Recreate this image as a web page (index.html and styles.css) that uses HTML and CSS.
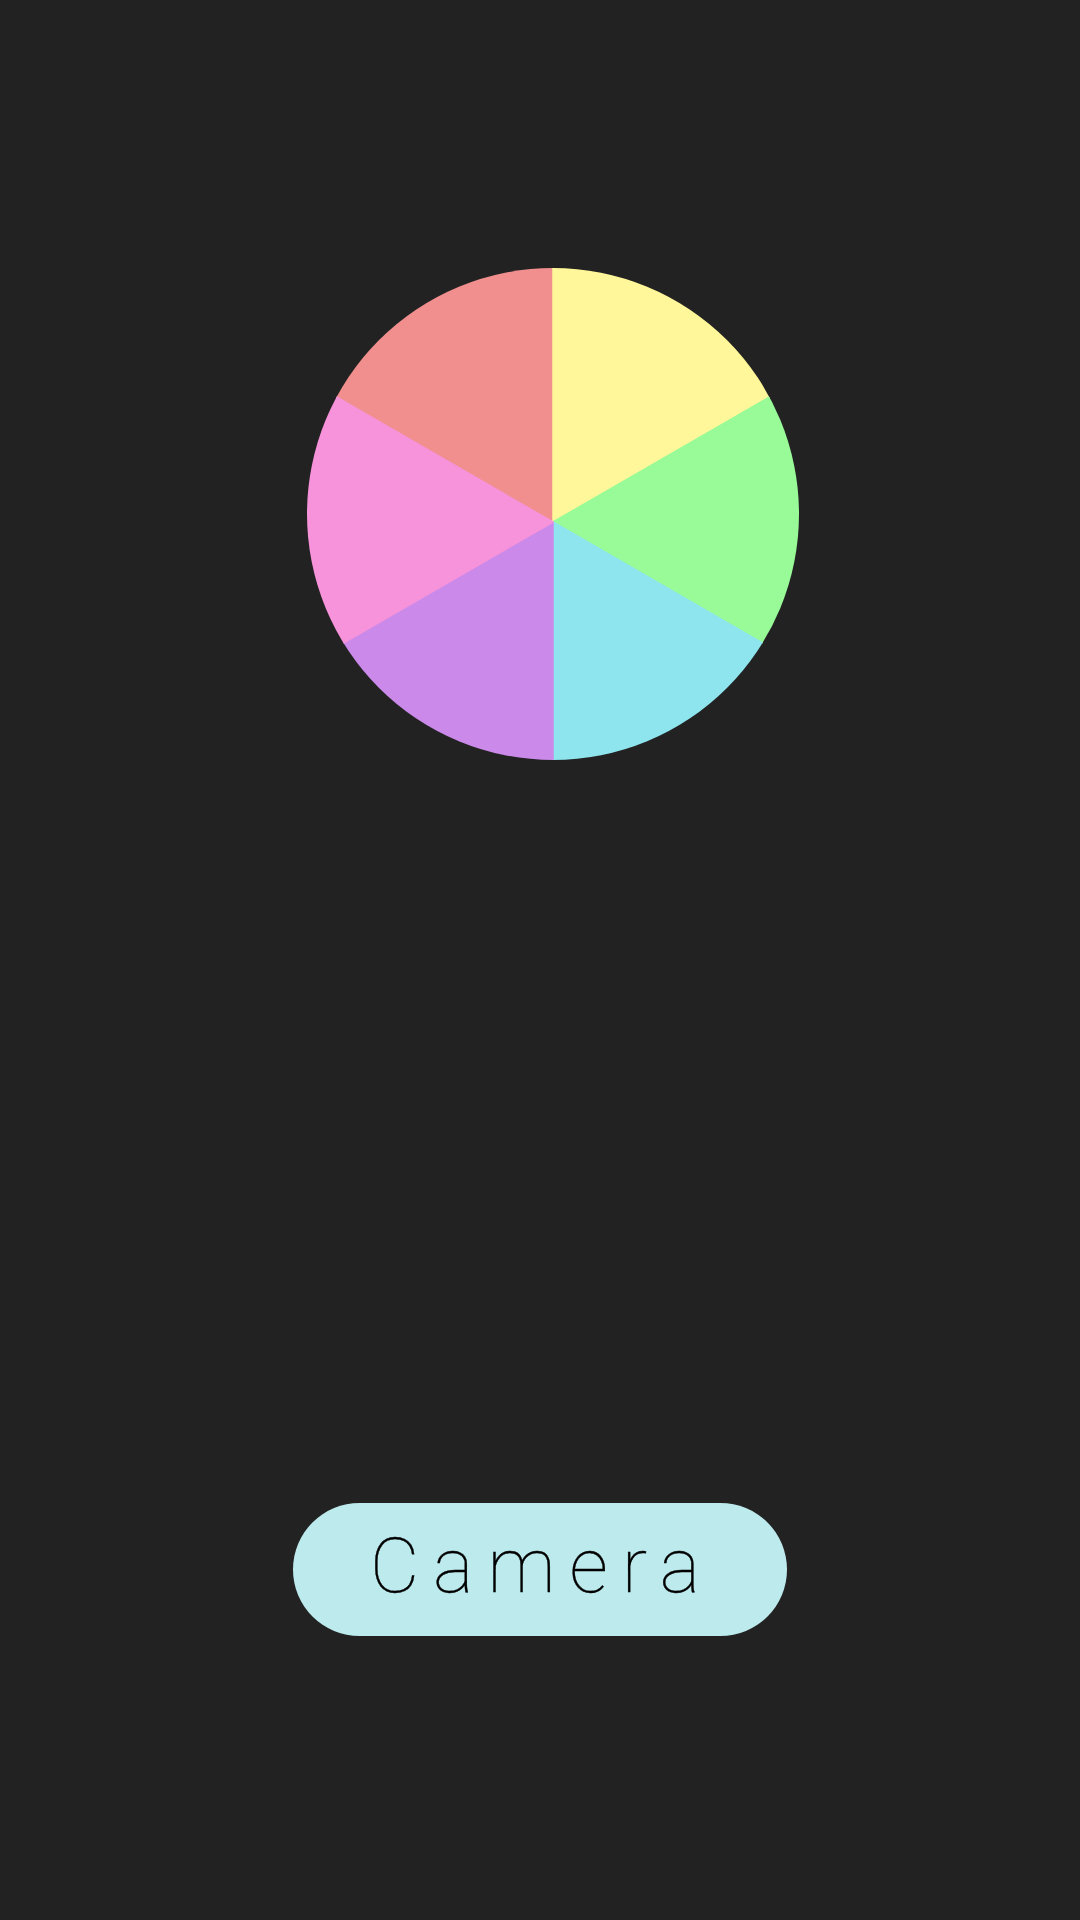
FILE: index.html
```html
<!DOCTYPE html>
<html lang="en">
<head>
<meta charset="utf-8">
<title>Camera</title>
<link rel="stylesheet" href="styles.css">
</head>
<body>
  <main class="screen">
    <div class="wheel-wrap">
      <svg class="wheel" width="492" height="492" viewBox="0 0 492 492" xmlns="http://www.w3.org/2000/svg">
        <defs>
          <clipPath id="disc">
            <circle cx="246" cy="246" r="246"/>
          </clipPath>
        </defs>
        <g clip-path="url(#disc)" stroke-width="1.5" stroke-linejoin="round">
          <polygon points="246,254 -620,-246 246,-1000" fill="#F08F8E" stroke="#F08F8E"/>
          <polygon points="246,254 246,-1000 1112,-246" fill="#FFF799" stroke="#FFF799"/>
          <polygon points="246,254 1112,-246 1112,754" fill="#98FB98" stroke="#98FB98"/>
          <polygon points="246,254 1112,754 246,1254" fill="#8EE5EE" stroke="#8EE5EE"/>
          <polygon points="246,254 246,1254 -620,754" fill="#CB8AE9" stroke="#CB8AE9"/>
          <polygon points="246,254 -620,754 -620,-246" fill="#F793DB" stroke="#F793DB"/>
        </g>
      </svg>
    </div>
    <button class="camera-btn" type="button"><span class="label">Camera</span></button>
  </main>
</body>
</html>
```

FILE: styles.css
```css
html, body {
  margin: 0;
  padding: 0;
  background: #222222;
}

.screen {
  width: 1080px;
  height: 1920px;
  display: flex;
  flex-direction: column;
  align-items: center;
  padding-top: 268px;
  box-sizing: border-box;
}

.wheel-wrap {
  display: flex;
  padding-left: 26px;
}

.wheel {
  display: block;
}

.camera-btn {
  margin-top: 743px;
  width: 494px;
  height: 133px;
  border: none;
  border-radius: 67px;
  background: #BDEAED;
  display: flex;
  align-items: center;
  justify-content: center;
  padding: 0 0 8px 4px;
  cursor: pointer;
}

.label {
  font-family: Roboto, "Noto Sans", sans-serif;
  font-weight: 100;
  font-size: 76px;
  letter-spacing: 14px;
  color: #000000;
  line-height: normal;
  -webkit-text-stroke: 0.4px #000000;
}
```
